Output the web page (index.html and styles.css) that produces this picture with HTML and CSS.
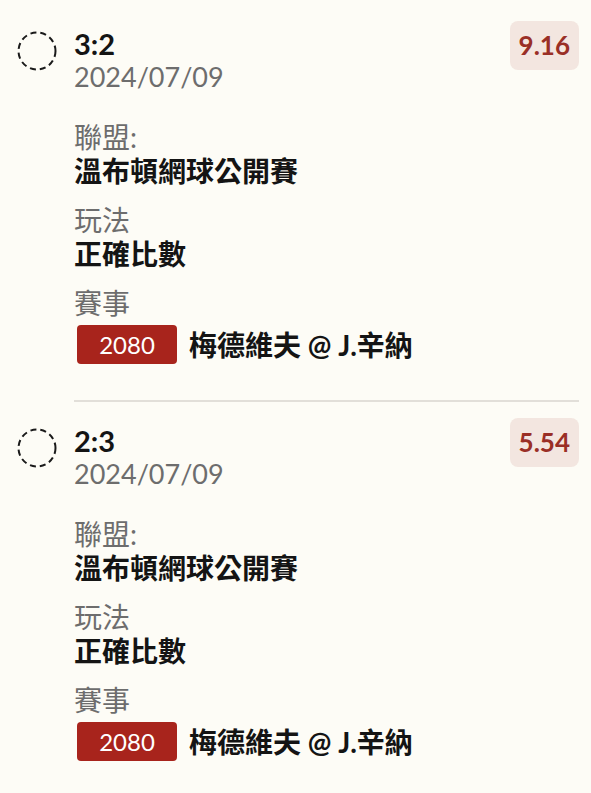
FILE: index.html
```html
<!DOCTYPE html>
<html lang="zh-Hant">
<head>
    <meta name="viewport" content="width=device-width, initial-scale=1.0">
    <link rel="stylesheet" href="styles.css">
    <title>Bets</title>
</head>

<body>
    <div class="bet-list">
        <div class="bet-card">
            <svg class="status-icon" width="40" height="40" viewBox="0 0 40 40">
                <circle cx="20" cy="20" r="18.5" fill="none" stroke="#1a1a1a" stroke-width="2" stroke-dasharray="6 4"></circle>
            </svg>
            <div class="bet-body">
                <div class="bet-head">
                    <div>
                        <div class="score">3:2</div>
                        <div class="date">2024/07/09</div>
                    </div>
                    <span class="odds">9.16</span>
                </div>
                <div class="field">
                    <div class="field-label">聯盟:</div>
                    <div class="field-value">溫布頓網球公開賽</div>
                </div>
                <div class="field">
                    <div class="field-label">玩法</div>
                    <div class="field-value">正確比數</div>
                </div>
                <div class="field">
                    <div class="field-label">賽事</div>
                    <div class="match">
                        <span class="match-no">2080</span>
                        <span class="field-value">梅德維夫 @ J.辛納</span>
                    </div>
                </div>
            </div>
        </div>

        <div class="bet-card">
            <svg class="status-icon" width="40" height="40" viewBox="0 0 40 40">
                <circle cx="20" cy="20" r="18.5" fill="none" stroke="#1a1a1a" stroke-width="2" stroke-dasharray="6 4"></circle>
            </svg>
            <div class="bet-body">
                <div class="bet-head">
                    <div>
                        <div class="score">2:3</div>
                        <div class="date">2024/07/09</div>
                    </div>
                    <span class="odds">5.54</span>
                </div>
                <div class="field">
                    <div class="field-label">聯盟:</div>
                    <div class="field-value">溫布頓網球公開賽</div>
                </div>
                <div class="field">
                    <div class="field-label">玩法</div>
                    <div class="field-value">正確比數</div>
                </div>
                <div class="field">
                    <div class="field-label">賽事</div>
                    <div class="match">
                        <span class="match-no">2080</span>
                        <span class="field-value">梅德維夫 @ J.辛納</span>
                    </div>
                </div>
            </div>
        </div>
    </div>
</body>

</html>
```

FILE: styles.css
```css
body {
    font-family: Lato, "Noto Sans CJK TC", sans-serif;
    margin: 0;
    padding: 0;
    background-color: #fdfcf6;
    color: #141414;
}

.bet-list {
    padding: 5px 12px 0 17px;
}

.bet-card {
    display: flex;
    align-items: flex-start;
    gap: 17px;
}

.status-icon {
    flex: none;
    margin-top: 26px;
}

.bet-body {
    flex: 1;
    padding: 23px 0 36px;
    border-bottom: 2px solid #e2dfd9;
}

.bet-head {
    display: flex;
    justify-content: space-between;
    align-items: flex-start;
}

.score {
    font-size: 29px;
    font-weight: bold;
    line-height: 32px;
}

.date {
    font-size: 27px;
    line-height: 34px;
    color: #6d6d6d;
}

.odds {
    margin-top: -7px;
    padding: 0 9px;
    height: 49px;
    line-height: 49px;
    font-size: 26px;
    font-weight: bold;
    color: #9a2f26;
    background-color: #f3e6e0;
    border-radius: 8px;
}

.field {
    margin-top: 15px;
    font-size: 28px;
    line-height: 34px;
}

.field:nth-child(2) {
    margin-top: 26px;
}

.field-label {
    color: #6d6d6d;
}

.field-value {
    font-weight: bold;
}

.match {
    display: flex;
    align-items: center;
    gap: 12px;
    margin-top: 5px;
    margin-left: 3px;
}

.match-no {
    width: 100px;
    height: 39px;
    line-height: 39px;
    text-align: center;
    font-size: 24px;
    color: #ffffff;
    background-color: #a8241c;
    border-radius: 4px;
}
```
